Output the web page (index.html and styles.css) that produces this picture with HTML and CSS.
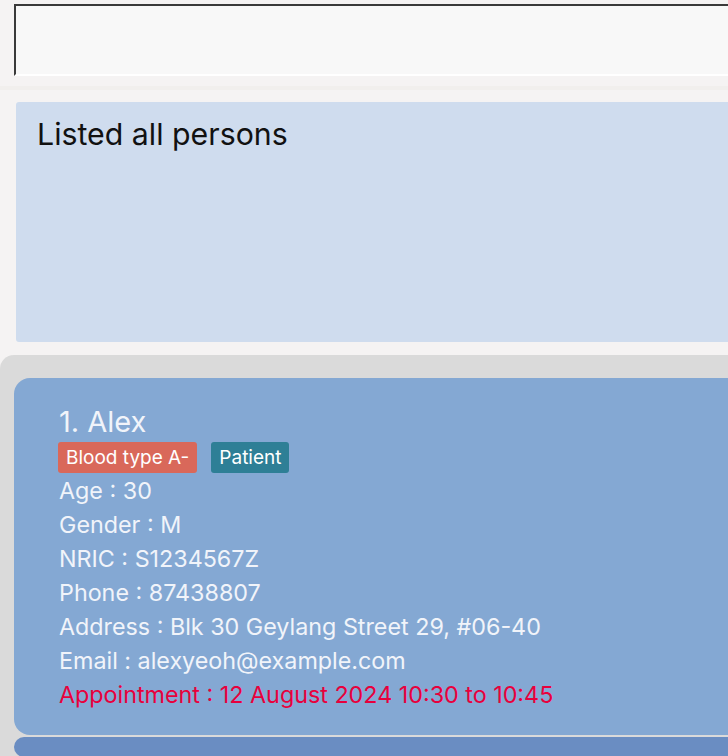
FILE: index.html
```html
<!DOCTYPE html>
<html>
<head>
<meta charset="utf-8">
<link rel="stylesheet" href="styles.css">
</head>
<body>
<div class="app">
  <div class="command-wrap">
    <div class="command-box"></div>
  </div>
  <div class="result-wrap">
    <div class="result-box">Listed all persons</div>
  </div>
  <div class="list-panel">
    <div class="card">
      <div class="name">1. Alex</div>
      <div class="tags">
        <span class="tag tag-blood">Blood type A-</span>
        <span class="tag tag-patient">Patient</span>
      </div>
      <div class="field">Age : 30</div>
      <div class="field">Gender : M</div>
      <div class="field">NRIC : S1234567Z</div>
      <div class="field">Phone : 87438807</div>
      <div class="field">Address : Blk 30 Geylang Street 29, #06-40</div>
      <div class="field">Email : alexyeoh@example.com</div>
      <div class="field appt">Appointment : 12 August 2024 10:30 to 10:45</div>
    </div>
    <div class="card card-next"></div>
  </div>
</div>
</body>
</html>
```

FILE: styles.css
```css
html, body {
  margin: 0;
  padding: 0;
  background: #f5f3f3;
  font-family: Inter, "Noto Sans", sans-serif;
  overflow: hidden;
}
.app {
  width: 728px;
  height: 756px;
  display: flex;
  flex-direction: column;
  overflow: hidden;
}
.command-wrap {
  flex-shrink: 0;
  padding: 4px 0 10px 14px;
  border-bottom: 4px solid #f1efed;
}
.command-box {
  height: 72px;
  box-sizing: border-box;
  background: #f8f8f8;
  border-top: 2px solid #3a3a3a;
  border-left: 2px solid #3a3a3a;
  border-bottom: 2px solid #ffffff;
}
.result-wrap {
  flex-shrink: 0;
  padding: 12px 0 13px 16px;
}
.result-box {
  height: 240px;
  box-sizing: border-box;
  background: #cfdcee;
  border-radius: 3px 0 0 3px;
  padding: 12px 0 0 21px;
  font-size: 30.3px;
  color: #111;
  line-height: 40px;
}
.list-panel {
  flex: 1;
  min-height: 0;
  overflow: hidden;
  background: #dadada;
  border-top-left-radius: 14px;
  padding: 23px 0 0 14px;
  display: flex;
  flex-direction: column;
  gap: 2px;
}
.card {
  flex-shrink: 0;
  background: #84a8d3;
  border-radius: 16px 0 0 16px;
  padding: 26px 0 23px 45px;
  color: #f1f4fa;
}
.card-next {
  background: #6a8dc2;
  height: 20px;
  padding: 0;
}
.name {
  font-size: 29px;
  line-height: 36px;
}
.tags {
  display: flex;
  gap: 14px;
  margin: 2px 0 1px -1px;
}
.tag {
  font-size: 19px;
  line-height: 31px;
  padding: 0 8px;
  border-radius: 3px;
  color: #fff;
}
.tag-blood { background: #d9685a; }
.tag-patient { background: #2e7f96; }
.field {
  font-size: 23.3px;
  line-height: 34px;
}
.appt {
  color: #e8003c;
}
```
